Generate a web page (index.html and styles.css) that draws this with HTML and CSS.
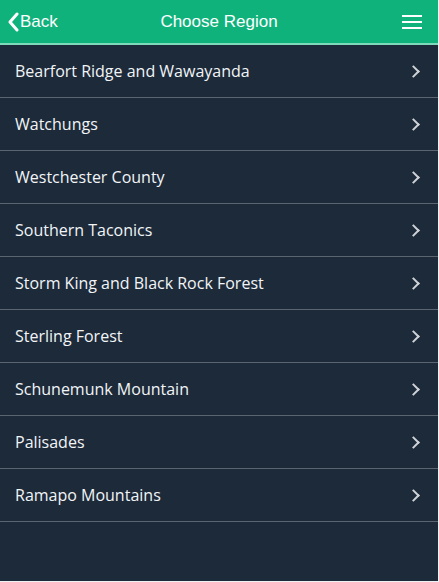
FILE: index.html
```html
<!DOCTYPE html>
<html>
<head>
<meta charset="utf-8">
<link rel="stylesheet" href="styles.css">
</head>
<body>
<div class="app">
  <header class="bar">
    <a class="back"><svg class="back-ic" width="12" height="20" viewBox="0 0 12 20"><path d="M10 2 L3 10 L10 18" fill="none" stroke="#fff" stroke-width="3" stroke-linecap="round" stroke-linejoin="round"/></svg><span>Back</span></a>
    <div class="title">Choose Region</div>
    <div class="menu"><span></span><span></span><span></span></div>
  </header>
  <ul class="list">
    <li>Bearfort Ridge and Wawayanda</li>
    <li>Watchungs</li>
    <li>Westchester County</li>
    <li>Southern Taconics</li>
    <li>Storm King and Black Rock Forest</li>
    <li>Sterling Forest</li>
    <li>Schunemunk Mountain</li>
    <li>Palisades</li>
    <li>Ramapo Mountains</li>
  </ul>
</div>
</body>
</html>
```
FILE: styles.css
```css
html, body { margin: 0; padding: 0; }
body { background: #eef0f2; width: 439px; height: 582px; overflow: hidden; }
.app { width: 438px; height: 581px; background: #1c2a3a; display: flex; flex-direction: column; }
.bar { height: 43px; background: #10b27c; border-bottom: 2px solid #7fd9bb; display: flex; align-items: center; position: relative; color: #fff; font-family: "Liberation Sans", Arial, sans-serif; }
.back { display: flex; align-items: center; padding-left: 7px; font-size: 17px; gap: 1px; }
.back-ic { display: block; }
.title { position: absolute; left: 0; right: 0; text-align: center; font-size: 17px; pointer-events: none; }
.menu { margin-left: auto; margin-right: 16px; display: flex; flex-direction: column; gap: 4px; width: 20px; }
.menu span { display: block; height: 2px; background: #fff; }
.list { list-style: none; margin: 0; padding: 0; }
.list li { height: 52px; border-bottom: 1px solid #5b6570; display: flex; align-items: center; padding-left: 15px; font-family: "Open Sans", sans-serif; font-size: 16px; color: #f2f4f6; position: relative; }
.list li::after { content: ""; position: absolute; right: 20px; top: 22px; width: 7px; height: 7px; border-right: 2.5px solid #cfd3d7; border-top: 2.5px solid #cfd3d7; transform: rotate(45deg); }
```
